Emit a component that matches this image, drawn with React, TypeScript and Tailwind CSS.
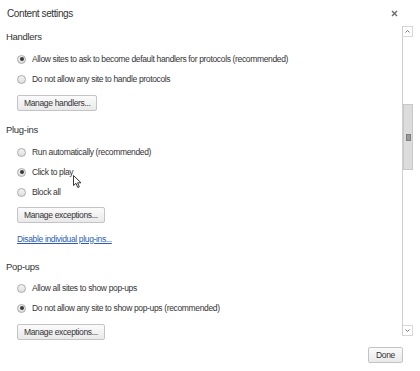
import React from "react";

function Radio({ checked }: { checked?: boolean }) {
  return (
    <span className="flex h-[9px] w-[9px] shrink-0 items-center justify-center rounded-full border border-[#a9a9a9] bg-gradient-to-b from-[#f4f4f4] to-[#dedede]">
      {checked && <span className="h-[4px] w-[4px] rounded-full bg-[#3a3a3a]" />}
    </span>
  );
}

function RadioRow({ label, checked }: { label: string; checked?: boolean }) {
  return (
    <div className="flex h-[20px] items-center gap-[6px] pl-[17px]">
      <Radio checked={checked} />
      <span>{label}</span>
    </div>
  );
}

function Btn({ label, className = "" }: { label: string; className?: string }) {
  return (
    <button
      className={`flex h-[16px] items-center rounded-[2px] border border-[#c4c4c4] bg-gradient-to-b from-[#fbfbfb] to-[#e9e9e9] px-[6px] text-[#333] ${className}`}
    >
      {label}
    </button>
  );
}

function Heading({ children, className = "" }: { children: React.ReactNode; className?: string }) {
  return <div className={`h-[14px] pl-[6px] text-[9.5px] leading-[14px] tracking-[-0.3px] text-[#333] ${className}`}>{children}</div>;
}

function Scrollbar() {
  return (
    <div className="flex w-[11px] flex-col border-l border-[#cfcfcf]">
      <div className="flex h-[11px] items-center justify-center border-r border-b border-t border-[#d8d8d8]">
        <svg width="5" height="3" viewBox="0 0 5 3">
          <path d="M0.5 2.5 L2.5 0.5 L4.5 2.5" stroke="#666" fill="none" strokeWidth="0.9" />
        </svg>
      </div>
      <div className="h-[67px]" />
      <div className="flex h-[66px] items-center justify-center border border-[#c8c8c8] bg-[#dcdcdc]">
        <span className="h-[7px] w-[5px] border border-[#7d7d7d] bg-[#9a9a9a]" />
      </div>
      <div className="flex-1" />
      <div className="flex h-[11px] items-center justify-center border-r border-b border-t border-[#d8d8d8]">
        <svg width="5" height="3" viewBox="0 0 5 3">
          <path d="M0.5 0.5 L2.5 2.5 L4.5 0.5" stroke="#666" fill="none" strokeWidth="0.9" />
        </svg>
      </div>
    </div>
  );
}

export default function App() {
  return (
    <div
      className="relative h-[371px] w-[420px] overflow-hidden bg-white text-[8.5px] tracking-[-0.35px] text-[#333]"
      style={{ fontFamily: '"Liberation Sans", Arial, sans-serif' }}
    >
      {/* Title */}
      <div className="flex h-[26px] items-center justify-between pl-[7px] pr-[22px]">
        <span className="text-[10px] tracking-[-0.4px] text-[#333]">Content settings</span>
        <svg width="7" height="7" viewBox="0 0 7 7">
          <path d="M1 1 L6 6 M6 1 L1 6" stroke="#6a6a6a" strokeWidth="1.4" />
        </svg>
      </div>

      {/* Body */}
      <div className="flex h-[310px] pr-[7px]">
        <div className="flex flex-1 flex-col">
          <Heading className="mt-[4px]">Handlers</Heading>
          <div className="mt-[5px]">
            <RadioRow label="Allow sites to ask to become default handlers for protocols (recommended)" checked />
            <RadioRow label="Do not allow any site to handle protocols" />
          </div>
          <div className="mt-[6px] pl-[17px]">
            <Btn label="Manage handlers..." />
          </div>

          <Heading className="mt-[12px]">Plug-ins</Heading>
          <div className="mt-[5px]">
            <RadioRow label="Run automatically (recommended)" />
            <RadioRow label="Click to play" checked />
            <RadioRow label="Block all" />
          </div>
          <div className="mt-[5px] pl-[17px]">
            <Btn label="Manage exceptions..." />
          </div>
          <div className="mt-[9px] h-[14px] pl-[17px] leading-[14px]">
            <span className="text-[#2a5db0] underline">Disable individual plug-ins...</span>
          </div>

          <Heading className="mt-[14px]">Pop-ups</Heading>
          <div className="mt-[4px]">
            <RadioRow label="Allow all sites to show pop-ups" />
            <RadioRow label="Do not allow any site to show pop-ups (recommended)" checked />
          </div>
          <div className="mt-[6px] pl-[17px]">
            <Btn label="Manage exceptions..." />
          </div>
        </div>
        <Scrollbar />
      </div>

      {/* Footer */}
      <div className="flex justify-end pr-[17px] pt-[11px]">
        <Btn label="Done" className="px-[7px]" />
      </div>

      {/* Mouse pointer */}
      <svg className="absolute left-[73px] top-[175px]" width="9" height="14" viewBox="0 0 9 14">
        <path d="M0.5 0.5 L0.5 10.5 L3 8.3 L4.8 12.5 L6.3 11.9 L4.6 7.8 L8 7.8 Z" fill="#fff" stroke="#222" strokeWidth="0.9" strokeLinejoin="round" />
      </svg>
    </div>
  );
}
